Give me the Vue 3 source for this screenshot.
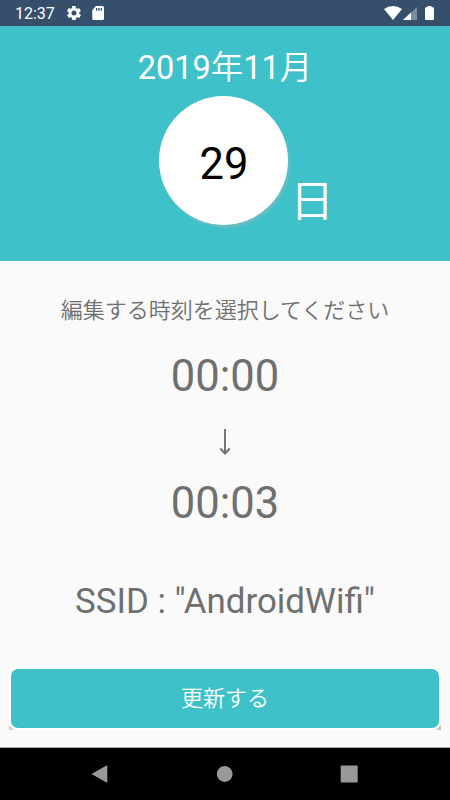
<template>
  <div class="screen">
    <div class="status-bar">
      <span class="clock">12:37</span>
      <svg class="gear" viewBox="2 2 20 20">
        <path d="M19.400 13c0-.3.1-.6.1-1s0-.7-.1-1l2.100-1.600c.2-.2.2-.4.1-.6l-2-3.500c-.1-.2-.4-.3-.6-.2l-2.500 1c-.5-.4-1.100-.7-1.700-1l-.4-2.600c0-.3-.2-.5-.5-.5h-4c-.2 0-.5.2-.5.4L9 5.100c-.6.2-1.100.6-1.700 1l-2.500-1c-.2-.1-.5 0-.6.2l-2 3.500c-.1.2-.1.4.1.6L4.500 11c0 .3-.1.7-.1 1s0 .7.1 1l-2.100 1.600c-.2.2-.2.4-.1.6l2 3.500c.1.2.4.3.6.2l2.500-1c.5.4 1.100.7 1.700 1l.4 2.600c0 .2.2.4.5.4h4c.2 0 .5-.2.5-.4l.4-2.600c.6-.3 1.200-.6 1.700-1l2.500 1c.2.1.5 0 .6-.2l2-3.500c.1-.2.1-.5-.1-.6zM12 15.600a3.600 3.600 0 1 1 0-7.200 3.600 3.600 0 0 1 0 7.200z" />
      </svg>
      <svg class="card" viewBox="0 0 12 14">
        <path fill-rule="evenodd" d="M4 0h6.500Q12 0 12 1.500v11Q12 14 10.500 14h-9Q.3 14 .3 12.500V4zM4 2v2.700h1.300V2zM6.300 2v2.700h1.300V2zM8.600 2v2.700h1.300V2z" />
      </svg>
      <div class="signals">
        <svg class="wifi" viewBox="0 0 18 14">
          <path d="M0 3Q9-3 18 3L9 14z" />
        </svg>
        <svg class="cell" viewBox="0 0 14 13">
          <path opacity=".35" d="M14 0v13H0z" />
          <path d="M8 5.600V13H0z" />
        </svg>
        <svg class="battery" viewBox="0 0 9 14">
          <path d="M2.500 0h4v1.300H8q1 0 1 1V13q0 1-1 1H1q-1 0-1-1V2.300q0-1 1-1h1.500z" />
        </svg>
      </div>
    </div>

    <header class="date">
      <div class="month">2019<span class="kanji">年</span>11<span class="kanji">月</span></div>
      <div class="day-row">
        <div class="day">29</div>
        <div class="unit kanji">日</div>
      </div>
    </header>

    <main class="content">
      <p class="prompt kanji">編集する時刻を選択してください</p>
      <div class="time">{{ startTime }}</div>
      <svg class="arrow" viewBox="0 0 12 27">
        <path d="M6 0v24M1.300 19.500 6 24.500l4.700-5" />
      </svg>
      <div class="time">{{ endTime }}</div>
      <div class="ssid">SSID : "{{ ssid }}"</div>
      <div class="button-frame">
        <button class="update">更新する</button>
      </div>
    </main>

    <nav class="nav-bar">
      <svg viewBox="0 0 18 18"><path d="M-.5 9 14.500.5Q15.300 0 15.300.8v16.400q0 .8-.8.3z" /></svg>
      <svg viewBox="0 0 18 18"><circle cx="8.700" cy="9" r="7.900" /></svg>
      <svg viewBox="0 0 18 18"><rect x=".7" y=".6" width="17" height="17" rx="1" /></svg>
    </nav>
  </div>
</template>

<script setup>
  import { ref } from 'vue';

  const startTime = ref('00:00');
  const endTime = ref('00:03');
  const ssid = ref('AndroidWifi');
</script>

<style>
  body {
    margin: 0;
  }
</style>

<style scoped>
  .screen {
    display: flex;
    flex-direction: column;
    width: 450px;
    height: 800px;
    overflow: hidden;
    background: #fafafa;
    color: #6f6f6f;
    font-family: Roboto, "Noto Sans CJK JP", sans-serif;
  }
  .kanji {
    font-family: Roboto, "Noto Sans CJK JP DemiLight", "Noto Sans CJK JP", sans-serif;
    font-weight: 350;
  }
  .status-bar {
    display: flex;
    align-items: center;
    box-sizing: border-box;
    height: 26px;
    padding: 1px 16px 0 15px;
    background: #364f6b;
    color: #fff;
    fill: #fff;
  }
  .clock {
    width: 52px;
    font-size: 16px;
    line-height: 26px;
  }
  .gear {
    width: 14px;
    height: 14px;
    margin-top: -1px;
  }
  .card {
    width: 12px;
    height: 14px;
    margin: -1px 0 0 11px;
  }
  .signals {
    display: flex;
    align-items: center;
    margin: -1px 0 0 auto;
  }
  .wifi {
    width: 18px;
    height: 14px;
  }
  .cell {
    width: 14px;
    height: 13px;
    margin-left: 1px;
  }
  .battery {
    width: 9px;
    height: 14px;
    margin-left: 8px;
  }
  .date {
    box-sizing: border-box;
    height: 235px;
    padding-top: 22px;
    background: #3fc1c9;
    color: #fff;
  }
  .month {
    height: 40px;
    font-size: 32.500px;
    line-height: 40px;
    text-align: center;
  }
  .month .kanji {
    line-height: 1;
  }
  .day-row {
    display: grid;
    grid-template-columns: 159px 129px 1fr;
    margin-top: 8px;
  }
  .day {
    grid-column: 2;
    box-sizing: border-box;
    height: 129px;
    padding: 8px 0 0 1px;
    border-radius: 50%;
    background: #fff;
    box-shadow: 2px 3px 1px #66bdc4;
    color: #000;
    font-size: 43.500px;
    line-height: 121px;
    text-align: center;
  }
  .unit {
    align-self: end;
    padding-left: 2px;
    font-size: 44px;
    line-height: 46px;
  }
  .content {
    display: flex;
    flex-direction: column;
    flex: 1;
    align-items: center;
  }
  .prompt {
    margin: 35px 0 0;
    font-size: 22px;
    line-height: 30px;
  }
  .time {
    margin-top: 26px;
    font-size: 43.500px;
    line-height: 50px;
  }
  .arrow {
    width: 12px;
    height: 27px;
    margin-top: 27px;
    fill: none;
    stroke: #6f6f6f;
    stroke-width: 1.900;
  }
  .arrow + .time {
    margin-top: 23px;
  }
  .ssid {
    margin-top: 53px;
    font-size: 34.900px;
    line-height: 40px;
  }
  .button-frame {
    align-self: stretch;
    margin: 44.500px 9px 0;
    padding: 2px 2px 0;
    border-radius: 9px 9px 0 0;
    background:
      linear-gradient(135deg, #fff 50%, #c4c4c4 70%) right bottom / 7px 7px no-repeat,
      linear-gradient(225deg, #fff 50%, #d4d4d4 70%) left bottom / 7px 7px no-repeat,
      #fff;
  }
  .update {
    display: block;
    width: 100%;
    height: 59px;
    margin-bottom: 2px;
    padding: 0;
    border: 0;
    border-radius: 7px;
    background: #3fc1c9;
    box-shadow: 0 0 0 2px #fff;
    color: #fff;
    font: 350 22px/60px Roboto, "Noto Sans CJK JP DemiLight", "Noto Sans CJK JP", sans-serif;
  }
  .nav-bar {
    display: flex;
    align-items: center;
    justify-content: center;
    gap: 106px;
    box-sizing: border-box;
    height: 53px;
    padding-bottom: 1px;
    border-top: 1px solid #aaa;
    background: #000;
    fill: #999;
  }
  .nav-bar svg {
    width: 18px;
    height: 18px;
    overflow: visible;
  }
</style>
